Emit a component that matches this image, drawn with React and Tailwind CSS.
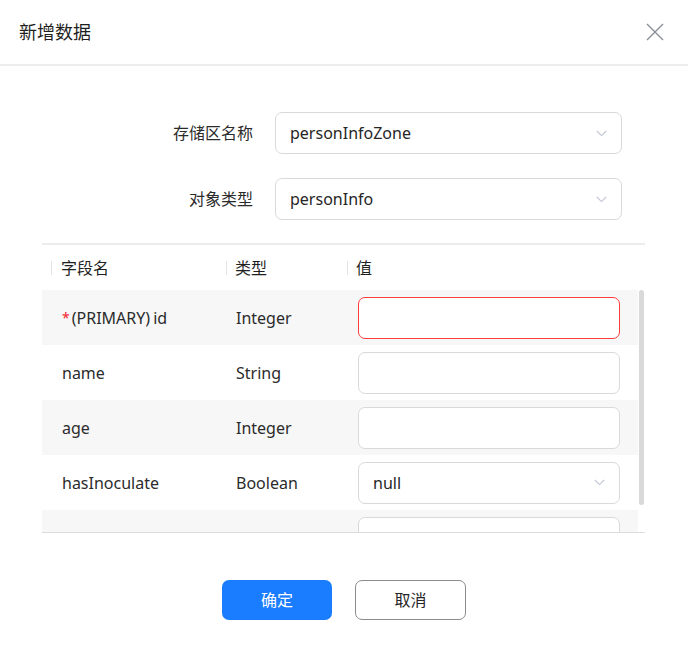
import React from "react";

const FONT = { fontFamily: '"Noto Sans", "Noto Sans CJK SC", sans-serif' };

const ROWS = [
  { name: "id", primary: true, type: "Integer", kind: "input", error: true },
  { name: "name", type: "String", kind: "input" },
  { name: "age", type: "Integer", kind: "input" },
  { name: "hasInoculate", type: "Boolean", kind: "select", value: "null" },
  { name: "userIN", type: "String", kind: "input" },
];

/* ===== CHEVRON ===== */
const Chevron = () => (
  <svg width="11" height="7" viewBox="0 0 11 7" fill="none">
    <path d="M0.8 1 L5.5 5.6 L10.2 1" stroke="#bfc6d1" strokeWidth="1.1" />
  </svg>
);

/* ===== SELECT BOX ===== */
const SelectBox = ({ value, className = "" }) => (
  <div
    className={`flex items-center justify-between border border-[#d9d9d9] rounded-[7px] bg-white pl-[14px] pr-[14px] text-[16px] text-[#262626] ${className}`}
  >
    <span>{value}</span>
    <Chevron />
  </div>
);

/* ===== FORM ROW ===== */
const FormRow = ({ label, value }) => (
  <div className="flex items-center">
    <div className="w-[253px] text-right text-[16px] text-[#2b2b2b]">{label}</div>
    <SelectBox value={value} className="ml-[22px] w-[347px] h-[42px]" />
  </div>
);

const HeadSep = () => <span className="w-px h-[14px] bg-[#e3e3e3]" />;

export default function App() {
  return (
    <div className="w-[688px] h-[653px] bg-white overflow-hidden" style={FONT}>
      {/* ===== HEADER ===== */}
      <div className="h-[64px] flex items-center justify-between pl-[19px] pr-[24px]">
        <span className="text-[18px] text-[#1f1f1f]">新增数据</span>
        <svg width="18" height="18" viewBox="0 0 18 18" fill="none">
          <path d="M1 1 L17 17 M17 1 L1 17" stroke="#8a8f99" strokeWidth="1.4" />
        </svg>
      </div>
      <div className="h-[2px] bg-[#ededed]" />

      {/* ===== FORM ===== */}
      <div className="pt-[46px] flex flex-col gap-[24px]">
        <FormRow label="存储区名称" value="personInfoZone" />
        <FormRow label="对象类型" value="personInfo" />
      </div>

      {/* ===== TABLE ===== */}
      <div className="mt-[23px] ml-[42px] w-[603px] text-[16px] text-[#2b2b2b]">
        <div className="h-[2px] bg-[#ececec]" />
        <div className="h-[45px] flex items-center">
          <div className="w-[184px] flex items-center">
            <span className="ml-[9px]" />
            <HeadSep />
            <span className="ml-[9px] text-[#1f1f1f]">字段名</span>
          </div>
          <div className="w-[121px] flex items-center">
            <HeadSep />
            <span className="ml-[8px] text-[#1f1f1f]">类型</span>
          </div>
          <div className="flex-1 flex items-center">
            <HeadSep />
            <span className="ml-[8px] text-[#1f1f1f]">值</span>
          </div>
        </div>

        <div className="flex h-[242px]">
          <div className="w-[596px] overflow-hidden">
            {ROWS.map((r, i) => (
              <div
                key={r.name}
                className={`h-[55px] flex items-center ${i % 2 === 0 ? "bg-[#f7f7f7]" : "bg-white"}`}
              >
                <div className="w-[184px] pl-[20px] flex items-center">
                  {r.primary ? (
                    <>
                      <span className="text-[#f5222d] text-[14px] mr-[2px]">*</span>
                      <span>(PRIMARY)</span>
                      <span className="ml-[3px]">{r.name}</span>
                    </>
                  ) : (
                    <span>{r.name}</span>
                  )}
                </div>
                <div className="w-[121px] pl-[10px]">{r.type}</div>
                <div className="flex-1 pl-[11px]">
                  {r.kind === "select" ? (
                    <SelectBox value={r.value} className="w-[262px] h-[42px]" />
                  ) : (
                    <div
                      className={`w-[262px] h-[42px] rounded-[7px] bg-white ${
                        r.error
                          ? "border-[1.5px] border-[#ff3b3b]"
                          : "border border-[#d9d9d9]"
                      }`}
                    />
                  )}
                </div>
              </div>
            ))}
          </div>
          {/* ===== SCROLLBAR ===== */}
          <div className="flex-1 pl-[1px]">
            <div className="w-[5px] h-[215px] rounded-full bg-[#d9d9d9]" />
          </div>
        </div>
        <div className="h-px bg-[#dcdcdc]" />
      </div>

      {/* ===== FOOTER ===== */}
      <div className="mt-[47px] flex justify-center gap-[23px]">
        <button className="w-[110px] h-[40px] rounded-[7px] bg-[#1a7cff] text-white text-[16px]">
          确定
        </button>
        <button className="w-[111px] h-[40px] rounded-[7px] border-[1.5px] border-[#8c8c8c] bg-white text-[#262626] text-[16px]">
          取消
        </button>
      </div>
    </div>
  );
}
